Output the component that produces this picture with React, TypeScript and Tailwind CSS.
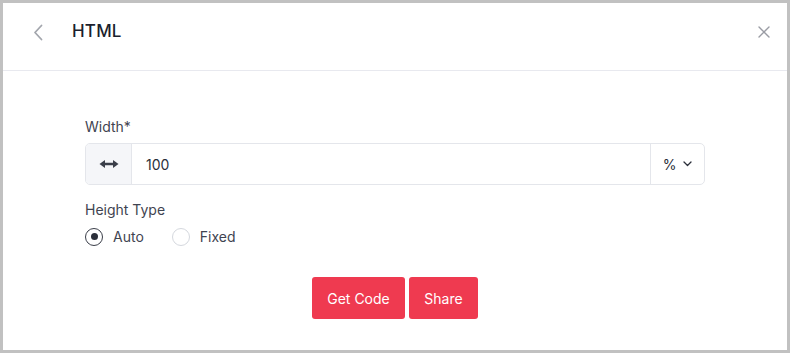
import React, { useState } from 'react';

const font = { fontFamily: 'Inter, "Noto Sans", sans-serif' };

function Radio({ checked, label, onClick }: { checked: boolean; label: string; onClick: () => void }) {
  return (
    <button type="button" onClick={onClick} className="flex items-center gap-[10px] text-[14px] text-[#3f4451]">
      <span
        className={`w-[18px] h-[18px] rounded-full border flex items-center justify-center bg-white ${
          checked ? 'border-[#3a3e49]' : 'border-[#d5d8de]'
        }`}
      >
        {checked && <span className="w-[7px] h-[7px] rounded-full bg-[#2b2f3a]" />}
      </span>
      <span>{label}</span>
    </button>
  );
}

export default function App() {
  const [type, setType] = useState<'auto' | 'fixed'>('auto');
  const [width, setWidth] = useState('100');

  return (
    <div style={font} className="w-[790px] h-[353px] box-border border-[3px] border-[#c1c1c1] bg-white flex flex-col overflow-hidden">
      <div className="h-[68px] shrink-0 border-b border-[#e8e9ef] flex items-center pl-[30px] pr-[17px] pb-[9px]">
        <button type="button" className="w-[12px] text-[#a3a6ad]">
          <svg width="10" height="17" viewBox="0 0 10 17" fill="none">
            <path d="M8.5 1.5L2 8.5l6.5 7" stroke="currentColor" strokeWidth="1.8" strokeLinecap="round" strokeLinejoin="round" />
          </svg>
        </button>
        <h1 className="ml-[27px] text-[17px] font-medium text-[#1b1f2e] tracking-[0.2px]">HTML</h1>
        <button type="button" className="ml-auto text-[#9a9ca4]">
          <svg width="12" height="12" viewBox="0 0 12 12" fill="none">
            <path d="M1 1l10 10M11 1L1 11" stroke="currentColor" strokeWidth="1.4" strokeLinecap="round" />
          </svg>
        </button>
      </div>

      <div className="px-[82px] pt-[46px] flex flex-col">
        <label className="text-[14px] text-[#3f4451] leading-[20px]">Width*</label>
        <div className="mt-[6px] h-[42px] flex border border-[#e4e6eb] rounded-[5px] overflow-hidden">
          <div className="w-[46px] bg-[#f5f6f9] border-r border-[#e4e6eb] flex items-center justify-center text-[#3a3e49]">
            <svg width="20" height="10" viewBox="0 0 20 10" fill="none">
              <path d="M3 5h14" stroke="currentColor" strokeWidth="2.6" />
              <path d="M0.5 5L6 1v8z" fill="currentColor" strokeLinejoin="round" />
              <path d="M19.5 5L14 1v8z" fill="currentColor" strokeLinejoin="round" />
            </svg>
          </div>
          <input
            value={width}
            onChange={e => setWidth(e.target.value)}
            className="flex-1 px-[14px] text-[14px] text-[#2b2f3a] outline-none bg-white"
            style={font}
          />
          <div className="w-[54px] border-l border-[#e4e6eb] flex items-center justify-center gap-[7px] text-[14px] text-[#2b2f3a]">
            <span>%</span>
            <svg width="9" height="6" viewBox="0 0 9 6" fill="none">
              <path d="M1 1l3.5 3.5L8 1" stroke="currentColor" strokeWidth="1.3" strokeLinecap="round" strokeLinejoin="round" />
            </svg>
          </div>
        </div>

        <label className="mt-[15px] text-[14px] text-[#3f4451] leading-[20px]">Height Type</label>
        <div className="mt-[6px] flex items-center gap-[28px]">
          <Radio checked={type === 'auto'} label="Auto" onClick={() => setType('auto')} />
          <Radio checked={type === 'fixed'} label="Fixed" onClick={() => setType('fixed')} />
        </div>

        <div className="mt-[30px] flex justify-center gap-[4px]">
          <button type="button" className="h-[42px] w-[93px] rounded-[3px] bg-[#ef3a50] text-white text-[14px]">Get Code</button>
          <button type="button" className="h-[42px] w-[69px] rounded-[3px] bg-[#ef3a50] text-white text-[14px]">Share</button>
        </div>
      </div>
    </div>
  );
}
